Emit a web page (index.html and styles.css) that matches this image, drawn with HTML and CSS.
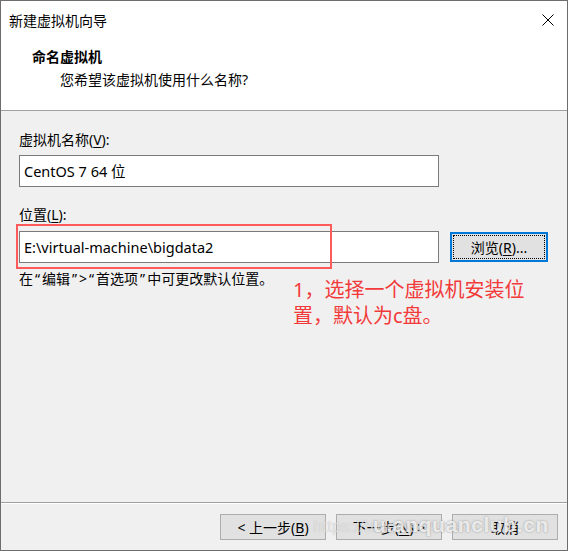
FILE: index.html
```html
<!DOCTYPE html>
<html lang="zh-CN">
	<head>
		<meta charset="UTF-8" />
		<title>新建虚拟机向导</title>
		<link rel="stylesheet" href="styles.css">
	</head>

	<body>
		<div class="window">
			<header class="wizard-header">
				<div class="titlebar">
					<span class="titlebar-text">新建虚拟机向导</span>
					<svg class="close-icon" width="12" height="12" viewBox="0 0 12 12">
						<path d="M0.5 0.5 L11.5 11.5 M11.5 0.5 L0.5 11.5" stroke="#000" stroke-width="1" fill="none" />
					</svg>
				</div>
				<div class="page-info">
					<div class="page-title">命名虚拟机</div>
					<div class="page-desc">您希望该虚拟机使用什么名称?</div>
				</div>
			</header>

			<main class="wizard-content">
				<div class="field-label">虚拟机名称(<u>V</u>):</div>
				<div class="text-input">CentOS 7 64 位</div>

				<div class="field-label field-label_second">位置(<u>L</u>):</div>
				<div class="location-row">
					<div class="text-input">E:\virtual-machine\bigdata2</div>
					<button class="btn btn_browse">浏览(<u>R</u>)...</button>
				</div>
				<div class="hint">在<span class="quote">“</span>编辑<span class="quote">”</span>&gt;<span class="quote">“</span>首选项<span class="quote">”</span>中可更改默认位置。</div>

				<div class="mark-box"></div>
				<div class="mark-note">1，选择一个虚拟机安装位<br>置，默认为c盘。</div>
			</main>

			<footer class="wizard-footer">
				<button class="btn">&lt; 上一步(<u>B</u>)</button>
				<button class="btn">下一步(<u>N</u>) &gt;</button>
				<button class="btn">取消</button>
			</footer>

			<div class="watermark-url">https://blog.csdn.net</div>
			<div class="watermark-site">u.anquanclub.cn</div>
		</div>
	</body>
</html>
```

FILE: styles.css
```css
html {
	box-sizing: border-box;
}

*,
*::after,
*::before {
	box-sizing: inherit;
}

body {
	margin: 0;
	background-color: #fff;
	font-family: "Noto Sans", "Noto Sans CJK SC", sans-serif;
	font-size: 14px;
	color: #000;
}

u {
	text-decoration-thickness: 1px;
	text-underline-offset: 2px;
}

.window {
	position: relative;
	display: flex;
	flex-direction: column;
	width: 568px;
	height: 551px;
	border: 1px solid #6d6d6d;
	background-color: #f0f0f0;
	overflow: hidden;
}

.wizard-header {
	height: 110px;
	background-color: #fff;
	border-bottom: 1px solid #a0a0a0;
}

.titlebar {
	display: flex;
	justify-content: space-between;
	align-items: center;
	height: 37px;
	padding: 0 13px 0 8px;
}

.close-icon {
	display: block;
}

.page-info {
	padding: 7px 0 0 31px;
	line-height: 23px;
}

.page-title {
	font-weight: 700;
}

.page-desc {
	margin-left: 28px;
}

.wizard-content {
	position: relative;
	flex: 1;
	padding: 19px 0 0 18px;
}

.field-label {
	line-height: 20px;
	margin-bottom: 5px;
}

.field-label_second {
	margin-top: 18px;
	margin-bottom: 6px;
}

.text-input {
	width: 420px;
	height: 32px;
	padding: 0 4px;
	line-height: 30px;
	background-color: #fff;
	border: 1px solid #7a7a7a;
	font-size: 14.5px;
}

.location-row {
	display: flex;
	align-items: center;
	gap: 11px;
}

.btn {
	height: 26px;
	width: 106px;
	padding: 0;
	font: inherit;
	color: #000;
	background-color: #e1e1e1;
	border: 1px solid #adadad;
}

.btn_browse {
	position: relative;
	width: 98px;
	height: 30px;
	border: 2px solid #0078d7;
}

.btn_browse::after {
	content: "";
	position: absolute;
	inset: 1px;
	border: 1px dotted #000;
}

.hint {
	margin-top: 6px;
	line-height: 20px;
}

.quote {
	padding: 0 2px;
}

.mark-box {
	position: absolute;
	left: 15px;
	top: 113px;
	width: 316px;
	height: 45px;
	border: 2px solid #ff5a5a;
}

.mark-note {
	position: absolute;
	left: 292px;
	top: 166px;
	font-size: 20px;
	line-height: 26px;
	color: #f23a3a;
}

.wizard-footer {
	display: flex;
	justify-content: flex-end;
	gap: 10px;
	height: 48px;
	padding: 11px 9px 0 0;
	border-top: 1px solid #a0a0a0;
	box-shadow: inset 0 1px #fff;
}

/* blog watermark pasted over the screenshot */
.watermark-url {
	position: absolute;
	left: 312px;
	top: 516px;
	font-family: "Liberation Sans", sans-serif;
	font-size: 17px;
	color: rgb(255 255 255 / 55%);
	text-shadow: 0 0 1px rgb(150 150 150 / 60%);
	pointer-events: none;
}

.watermark-site {
	position: absolute;
	left: 372px;
	top: 512px;
	font-family: "Liberation Sans", sans-serif;
	font-size: 21px;
	font-weight: 700;
	letter-spacing: 0.6px;
	color: rgb(255 255 255 / 80%);
	text-shadow: 0 0 2px rgb(110 110 110 / 70%);
	pointer-events: none;
}
```
